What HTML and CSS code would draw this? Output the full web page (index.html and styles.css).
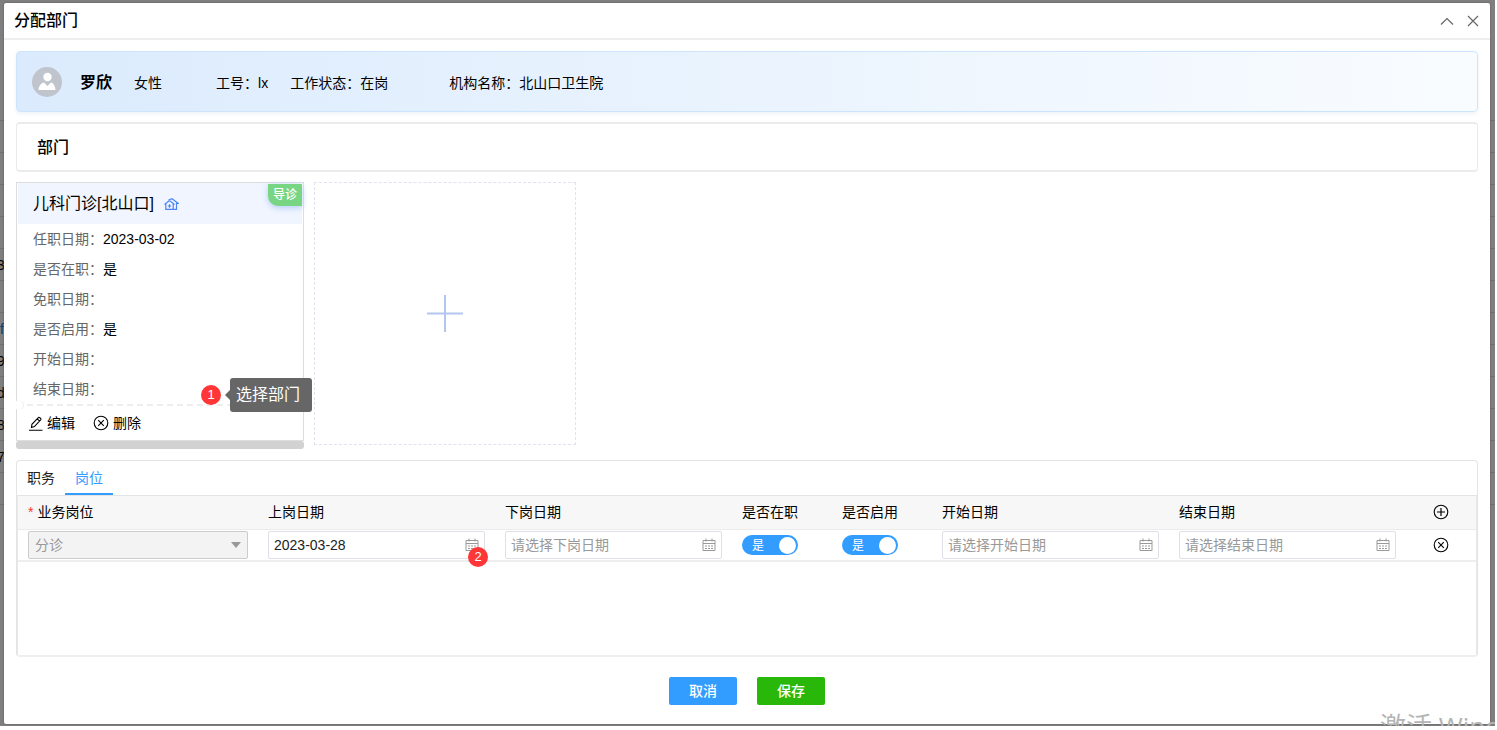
FILE: index.html
```html
<!DOCTYPE html>
<html lang="zh-CN">
<head>
<meta charset="utf-8">
<title>分配部门</title>
<link rel="stylesheet" href="styles.css">
</head>
<body>
<svg class="sprite" aria-hidden="true">
  <symbol id="calendar" viewBox="0 0 14 14">
    <path d="M1 2.500h12v10H1zM1 5.500h12M4 .5v3M10 .5v3" fill="none" stroke="currentColor"/>
    <path d="M3 8h2m1 0h2m1 0h2M3 10.500h2m1 0h2m1 0h2" stroke="currentColor"/>
  </symbol>
  <symbol id="circle-x" viewBox="0 0 16 16">
    <circle cx="8" cy="8" r="6.800" fill="none" stroke="currentColor" stroke-width="1.100"/>
    <path d="M5.200 5.200l5.600 5.600M10.800 5.200l-5.600 5.600" stroke="currentColor" stroke-width="1.100"/>
  </symbol>
  <symbol id="circle-plus" viewBox="0 0 16 16">
    <circle cx="8" cy="8" r="6.800" fill="none" stroke="currentColor" stroke-width="1.100"/>
    <path d="M8 4v8M4 8h8" stroke="currentColor" stroke-width="1.200"/>
  </symbol>
</svg>
<div class="backdrop">
  <div class="behind" aria-hidden="true">
    <i></i><i></i><i></i><i></i><i>3</i><i></i><i class="link">f4</i><i>9</i><i>d</i><i>8</i><i>7</i><i></i>
  </div>
  <main class="dialog">
    <header class="dialog-head">
      <h1>分配部门</h1>
      <button class="icon-btn" type="button" aria-label="收起"><svg width="14" height="14" viewBox="0 0 14 14"><path d="M1 10.500L7 4.500l6 6" fill="none" stroke="#666" stroke-width="1.200"/></svg></button>
      <button class="icon-btn" type="button" aria-label="关闭"><svg width="14" height="14" viewBox="0 0 14 14"><path d="M2 2l10 10M12 2L2 12" fill="none" stroke="#666" stroke-width="1.200"/></svg></button>
    </header>
    <div class="dialog-body">
      <section class="person">
        <svg class="avatar" width="30" height="30" viewBox="0 0 30 30"><circle cx="15" cy="15" r="15" fill="#c0c4cc"/><circle cx="15.500" cy="10" r="4.200" fill="#fff"/><path d="M6.500 23c.3-4 2.500-7 5.500-7.500l3.500 3.500 3.500-3.500c2.500.5 4 3.500 4.500 7.500z" fill="#fff"/></svg>
        <strong>罗欣</strong>
        <span class="sex">女性</span>
        <span class="job">工号：lx</span>
        <span class="state">工作状态：在岗</span>
        <span>机构名称：北山口卫生院</span>
      </section>
      <h2 class="section-title">部门</h2>
      <section class="cards">
        <div class="card-scroll">
          <article class="card">
            <h3>儿科门诊[北山口]
              <svg width="15" height="12" viewBox="0 0 15 12" fill="none" stroke="#4b84f4" stroke-width="1.200"><path d="M.5 6.500L5.500 2.500l5 4M1.800 6v5.300h7.400V6M4.500 2L8 .7l6 4.600h-1.500v6H9.500M3.800 8h3.400M5.500 6.300v3.400"/></svg>
            </h3>
            <span class="tag">导诊</span>
            <dl>
              <div><dt>任职日期：</dt><dd>2023-03-02</dd></div>
              <div><dt>是否在职：</dt><dd>是</dd></div>
              <div><dt>免职日期：</dt><dd></dd></div>
              <div><dt>是否启用：</dt><dd>是</dd></div>
              <div><dt>开始日期：</dt><dd></dd></div>
              <div><dt>结束日期：</dt><dd></dd></div>
            </dl>
            <div class="card-actions">
              <button type="button"><svg width="14" height="15" viewBox="0 0 14 15" fill="none" stroke="currentColor" stroke-width="1.100"><path d="M0 14.200h13.500M2.500 11.500l.4-3.200L9.600 1.300c.5-.5 2.900 1.600 2.300 2.300L5.400 10.600zM8.200 2.800l2.500 2.300"/></svg>编辑</button>
              <button type="button"><svg width="16" height="16"><use href="#circle-x"/></svg>删除</button>
            </div>
            <div class="callout"><b class="badge">1</b><span class="tip">选择部门</span></div>
          </article>
          <div class="scrollbar"></div>
        </div>
        <button class="add-card" type="button" aria-label="添加部门"><svg width="36" height="37" viewBox="0 0 36 37"><path d="M18 0v37" stroke="#b3c6f0" stroke-width="2"/><path d="M0 18.500h36" stroke="#b3c6f0" stroke-width="2"/></svg></button>
      </section>
      <section class="panel">
        <nav class="tabs">
          <a href="#duty">职务</a>
          <a href="#post" class="active">岗位</a>
        </nav>
        <div class="table-box">
        <table id="post">
          <colgroup><col class="c-post"><col><col><col class="c-switch"><col class="c-switch"><col><col><col class="c-op"></colgroup>
          <thead>
            <tr>
              <th><span class="req">*</span>业务岗位</th><th>上岗日期</th><th>下岗日期</th><th>是否在职</th><th>是否启用</th><th>开始日期</th><th>结束日期</th>
              <th class="op"><button class="icon-btn" type="button" aria-label="新增"><svg width="16" height="16"><use href="#circle-plus"/></svg></button></th>
            </tr>
          </thead>
          <tbody>
            <tr>
              <td><div class="field disabled"><select aria-label="业务岗位" disabled><option>分诊</option></select></div></td>
              <td><div class="field"><input type="text" aria-label="上岗日期" value="2023-03-28"><svg width="14" height="14"><use href="#calendar"/></svg><b class="badge on-field">2</b></div></td>
              <td><div class="field"><input type="text" aria-label="下岗日期" placeholder="请选择下岗日期"><svg width="14" height="14"><use href="#calendar"/></svg></div></td>
              <td><label class="switch"><input type="checkbox" aria-label="是否在职" checked><span>是</span></label></td>
              <td><label class="switch"><input type="checkbox" aria-label="是否启用" checked><span>是</span></label></td>
              <td><div class="field"><input type="text" aria-label="开始日期" placeholder="请选择开始日期"><svg width="14" height="14"><use href="#calendar"/></svg></div></td>
              <td><div class="field"><input type="text" aria-label="结束日期" placeholder="请选择结束日期"><svg width="14" height="14"><use href="#calendar"/></svg></div></td>
              <td class="op"><button class="icon-btn" type="button" aria-label="删除行"><svg width="16" height="16"><use href="#circle-x"/></svg></button></td>
            </tr>
          </tbody>
        </table>
        </div>
      </section>
      <footer class="buttons">
        <button class="btn cancel" type="button">取消</button>
        <button class="btn save" type="button">保存</button>
      </footer>
    </div>
  </main>
  <div class="watermark">激活 Windows</div>
</div>
</body>
</html>
```
FILE: styles.css
```css
* { box-sizing: border-box; }
body {
  margin: 0;
  padding: 0 2px 4px 0;
  min-height: 100vh;
  display: flex;
  background: #fff;
  color: #000;
  font: 14px/20px "Liberation Sans", "Noto Sans CJK SC", sans-serif;
}
button, input, select { font: inherit; color: inherit; }
button { background: none; border: 0; padding: 0; cursor: pointer; }
svg { display: block; flex: none; }
h1, h2, h3, dl, dd { margin: 0; }
.sprite { position: absolute; width: 0; height: 0; }

.backdrop {
  position: relative;
  flex: 1;
  display: flex;
  padding: 3px 5px 2px 4px;
  background: #7f7f7f;
  overflow: hidden;
}
.behind { position: absolute; inset: 120px 0 auto; border-top: 1px solid #6f6f6f; }
.behind i {
  display: block;
  height: 32px;
  border-bottom: 1px solid #6f6f6f;
  font-style: normal;
  line-height: 32px;
  text-indent: -3px;
}
.behind .link { color: #0b3a70; text-indent: 0; }

.dialog {
  position: relative;
  flex: 1;
  min-width: 0;
  display: flex;
  flex-direction: column;
  background: #fff;
  border-radius: 2px;
  box-shadow: 0 0 2px #555;
}
.dialog-head {
  display: flex;
  align-items: center;
  gap: 12px;
  height: 37px;
  padding: 0 10px;
  border-bottom: 2px solid #eee;
}
.dialog-head h1 { flex: 1; font-size: 16px; font-weight: 500; }
.icon-btn { display: inline-flex; }
.dialog-body {
  flex: 1;
  display: flex;
  flex-direction: column;
  gap: 10px;
  padding: 11px 12px 19px;
}

.person {
  display: flex;
  align-items: center;
  height: 61px;
  padding: 3px 15px 0;
  border: 1px solid #cde5fc;
  border-radius: 4px;
  background: linear-gradient(to right, #dbebfd, #f9fcff);
  box-shadow: 0 2px 4px #f0f2f6;
}
.avatar { margin: 0 18px 2px 0; }
.person strong { margin-right: 22px; font-size: 16px; font-weight: 700; }
.sex { margin-right: 54px; }
.job { margin-right: 22px; }
.state { margin-right: 61px; }

.section-title {
  height: 50px;
  padding: 0 20px;
  border: 2px solid #ebebeb;
  border-width: 2px 1px;
  border-radius: 4px;
  font-size: 16px;
  font-weight: 500;
  line-height: 48px;
}

.cards { display: flex; gap: 10px; height: 268px; align-items: flex-start; }
.card-scroll { flex: none; width: 288px; }
.card { position: relative; border: 1px solid #ddd; height: 259px; }
.card h3 {
  display: flex;
  align-items: center;
  gap: 10px;
  height: 41px;
  margin: 0 1px;
  padding: 0 15px;
  background: #f0f5ff;
  font-size: 16px;
  font-weight: 400;
}
.tag {
  position: absolute;
  top: 1px;
  right: 1px;
  padding: 0 5px;
  border-radius: 0 0 0 10px;
  background: #77d584;
  box-shadow: 0 2px 6px #b8cdf5;
  color: #fff;
  font-size: 12px;
  font-weight: 500;
  line-height: 22px;
}
.card dl { padding: 0 16px; }
.card dl div { display: flex; line-height: 30px; }
.card dt { color: #666; }
.card-actions {
  position: relative;
  display: flex;
  gap: 18px;
  padding: 7px 12px 0;
  border-top: 2px dashed #eee;
}
.card-actions::before {
  content: "";
  position: absolute;
  top: -5px;
  left: -2px;
  width: 8px;
  height: 8px;
  border-radius: 0 4px 4px 0;
  background: #fff;
  box-shadow: 1px 0 1px #eee;
}
.card-actions button { display: flex; align-items: center; gap: 4px; }
.callout {
  position: absolute;
  left: 184px;
  bottom: 28px;
  display: flex;
  align-items: center;
  gap: 9px;
}
.badge {
  width: 20px;
  height: 20px;
  border-radius: 50%;
  background: #ff3637;
  color: #fff;
  font-size: 13px;
  font-weight: 400;
  line-height: 20px;
  text-align: center;
}
.tip {
  position: relative;
  padding: 0 12px 0 6px;
  border-radius: 3px;
  background: #666;
  color: #fff;
  font-size: 16px;
  line-height: 34px;
  white-space: nowrap;
}
.tip::before {
  content: "";
  position: absolute;
  top: 12px;
  right: 100%;
  border: 5px solid transparent;
  border-left: 0;
  border-right-color: #666;
}
.scrollbar { height: 8px; border-radius: 3px; background: #d2d2d2; }
.add-card {
  display: grid;
  place-items: center;
  width: 262px;
  height: 263px;
  border: 1px dashed #dfe3ee;
}

.panel {
  flex: 1;
  display: flex;
  flex-direction: column;
  border: 1px solid #e4e4e4;
  border-bottom: 2px solid #eee;
  border-radius: 4px;
}
.tabs { display: flex; border-bottom: 1px solid #e4e4e4; }
.tabs a { padding: 7px 10px 5px; border-bottom: 2px solid transparent; color: #222; text-decoration: none; }
.tabs .active { color: #339cff; border-color: #339cff; }
.table-box { flex: 1; border: 1px solid #e8e8e8; border-width: 0 1px; }
table { width: 100%; table-layout: fixed; border-collapse: collapse; }
.c-post { width: 240px; }
.c-switch { width: 100px; }
.c-op { width: 70px; }
th, td { padding: 0 10px; text-align: left; font-weight: 400; }
th { height: 33px; background: #f7f7f7; border-bottom: 1px solid #ebebeb; }
td { height: 32px; border-bottom: 2px solid #eee; }
.op { text-align: center; }
.op .icon-btn { display: flex; margin: 0 auto; }
.req { color: #f33; margin-right: 4px; }
.field {
  position: relative;
  display: flex;
  align-items: center;
  height: 28px;
  padding: 0 5px;
  border: 1px solid #dfe0e8;
  border-radius: 2px;
  color: #222;
}
.field input { flex: 1; width: 0; min-width: 0; padding: 0; border: 0; outline: 0; background: none; }
.field input::placeholder { color: #999; }
.field svg { color: #999; }
.disabled { padding: 0 6px; background: #f3f3f3; border-color: #ccc; }
.disabled::after {
  content: "";
  border: 5px solid transparent;
  border-top: 6px solid #999;
  border-bottom: 0;
}
.field select { flex: 1; appearance: none; border: 0; padding: 0; background: none; color: #999; opacity: 1; }
.on-field { position: absolute; right: -4px; top: 15px; z-index: 1; }
.switch {
  position: relative;
  display: flex;
  align-items: center;
  width: 56px;
  height: 20px;
  padding: 2px 0 0 10px;
  border-radius: 10px;
  background: #339cff;
  color: #fff;
  font-size: 12px;
}
.switch input {
  appearance: none;
  position: absolute;
  top: 2px;
  right: 2px;
  width: 17px;
  height: 17px;
  margin: 0;
  border-radius: 50%;
  background: #fff;
}

.buttons { display: flex; justify-content: center; gap: 20px; padding-top: 10px; }
.btn { width: 68px; height: 28px; border-radius: 2px; color: #fff; font-weight: 500; }
.cancel { background: #339cff; }
.save { background: #29b80a; }
.watermark {
  position: absolute;
  left: calc(100% - 115px);
  top: calc(100% - 18px);
  color: #b4b4b4;
  font-family: "Open Sans", "Noto Sans CJK SC", sans-serif;
  font-size: 26px;
  line-height: 36px;
  white-space: nowrap;
}
```
